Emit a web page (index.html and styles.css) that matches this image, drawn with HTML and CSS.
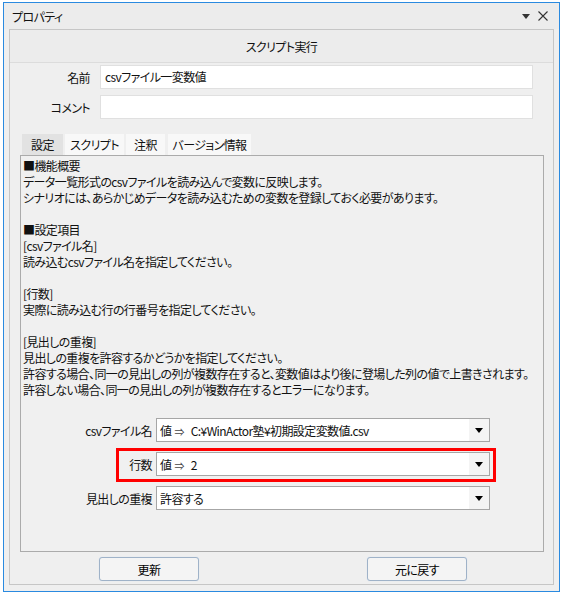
FILE: index.html
```html
<!DOCTYPE html>
<html lang="ja">
<head>
  <meta charset="UTF-8">
  <title>プロパティ</title>
  <link rel="stylesheet" href="styles.css">
</head>
<body>
<div class="window">
  <!-- title bar -->
  <div class="titlebar">
    <span class="title">プロパティ</span>
    <span class="controls">
      <svg width="8" height="5" viewBox="0 0 8 5"><path d="M0 0H8L4 5Z" fill="#333"/></svg>
      <svg width="10" height="10" viewBox="0 0 10 10"><path d="M0.5 0.5L9.5 9.5M9.5 0.5L0.5 9.5" stroke="#333" stroke-width="1.1" fill="none"/></svg>
    </span>
  </div>

  <div class="panel">
    <div class="header">スクリプト実行</div>

    <div class="row">
      <label class="row-label">名前</label>
      <div class="textbox">csvファイル一変数値</div>
    </div>
    <div class="row">
      <label class="row-label">コメント</label>
      <div class="textbox"></div>
    </div>

    <!-- tabs -->
    <div class="tabs">
      <div class="tab active">設定</div>
      <div class="tab tab-script">スクリプト</div>
      <div class="tab tab-note">注釈</div>
      <div class="tab tab-version">バージョン情報</div>
    </div>

    <div class="tab-body">
      <div class="desc">
        <p>■機能概要</p>
        <p>データ一覧形式のcsvファイルを読み込んで変数に反映します。</p>
        <p>シナリオには、あらかじめデータを読み込むための変数を登録しておく必要があります。</p>
        <p>&nbsp;</p>
        <p>■設定項目</p>
        <p>[csvファイル名]</p>
        <p>読み込むcsvファイル名を指定してください。</p>
        <p>&nbsp;</p>
        <p>[行数]</p>
        <p>実際に読み込む行の行番号を指定してください。</p>
        <p>&nbsp;</p>
        <p>[見出しの重複]</p>
        <p>見出しの重複を許容するかどうかを指定してください。</p>
        <p>許容する場合、同一の見出しの列が複数存在すると、変数値はより後に登場した列の値で上書きされます。</p>
        <p>許容しない場合、同一の見出しの列が複数存在するとエラーになります。</p>
      </div>

      <div class="fields">
        <div class="field">
          <span class="field-label">csvファイル名</span>
          <div class="combo">
            <span class="combo-text"><span class="kind">値</span><span class="arrow">⇒</span>C:¥WinActor塾¥初期設定変数値.csv</span>
            <span class="drop"><svg width="8" height="5" viewBox="0 0 8 5"><path d="M0 0H8L4 5Z" fill="#000"/></svg></span>
          </div>
        </div>
        <div class="field marked">
          <span class="field-label">行数</span>
          <div class="combo">
            <span class="combo-text"><span class="kind">値</span><span class="arrow">⇒</span>2</span>
            <span class="drop"><svg width="8" height="5" viewBox="0 0 8 5"><path d="M0 0H8L4 5Z" fill="#000"/></svg></span>
          </div>
        </div>
        <div class="field">
          <span class="field-label">見出しの重複</span>
          <div class="combo">
            <span class="combo-text">許容する</span>
            <span class="drop"><svg width="8" height="5" viewBox="0 0 8 5"><path d="M0 0H8L4 5Z" fill="#000"/></svg></span>
          </div>
        </div>
      </div>
    </div>

    <div class="buttons">
      <button class="btn">更新</button>
      <button class="btn">元に戻す</button>
    </div>
  </div>
</div>
</body>
</html>
```

FILE: styles.css
```css
/* General reset */
* {
  margin: 0;
  padding: 0;
  box-sizing: border-box;
}

body {
  font-family: "Noto Sans CJK JP", "Noto Sans", sans-serif;
  font-size: 12px;
  font-feature-settings: "palt";
  letter-spacing: -0.6px;
  color: #111;
  background: #fff;
}

.window {
  margin: 2px 0 0 3px;
  width: 557px;
  height: 590px;
  border: 1px solid #2a8ae0;
  background: #efefef;
  display: flex;
  flex-direction: column;
}

.titlebar {
  height: 26px;
  flex: none;
  display: flex;
  align-items: center;
  justify-content: space-between;
  padding: 0 11px 0 8px;
  background: #ececec;
}

.titlebar .controls {
  display: flex;
  align-items: center;
  gap: 8px;
}

.panel {
  flex: 1;
  margin: 0 5px 6px 5px;
  border: 1px solid #c6c6c6;
  background: #efefef;
  display: flex;
  flex-direction: column;
  padding-bottom: 3px;
}

.header {
  height: 33px;
  flex: none;
  border-bottom: 1px solid #dcdcdc;
  background: #ececec;
  display: flex;
  align-items: center;
  justify-content: center;
}

.row {
  display: flex;
  align-items: center;
  margin-top: 6px;
}

.header + .row {
  margin-top: 2px;
}

.row-label {
  width: 80px;
  text-align: right;
  margin-right: 10px;
}

.textbox {
  width: 433px;
  height: 24px;
  background: #fff;
  border: 1px solid #e0e0e0;
  padding: 0 4px;
  line-height: 22px;
}

.tabs {
  display: flex;
  gap: 2px;
  margin: 15px 0 0 12px;
  height: 21px;
}

.tab {
  width: 41px;
  text-align: center;
  line-height: 21px;
  background: #f8f8f8;
}

.tab-script {
  width: 59px;
}

.tab-note {
  width: 39px;
  margin-right: 1px;
}

.tab-version {
  width: 83px;
}

.tab.active {
  background: #e2e2e2;
}

.tab-body {
  height: 397px;
  margin: 0 9px 0 10px;
  border: 1px solid #ababab;
  background: #f0f0f0;
  padding: 2px 2px 0 2px;
}

.desc p {
  line-height: 16px;
  white-space: nowrap;
}

.fields {
  margin-top: 20px;
  display: flex;
  flex-direction: column;
  align-items: flex-start;
  gap: 10px;
}

.field {
  display: flex;
  align-items: center;
  position: relative;
}

.field-label {
  width: 129px;
  text-align: right;
  margin-right: 4px;
}

.combo {
  width: 334px;
  height: 24px;
  background: #fff;
  border: 1px solid #a6a6a6;
  display: flex;
  align-items: center;
}

.combo-text {
  flex: 1;
  padding-left: 3px;
  white-space: nowrap;
}

.combo-text .arrow {
  font-size: 10px;
  color: #444;
  margin: 0 7px 0 3px;
}

.drop {
  width: 20px;
  height: 22px;
  background: #f4f4f4;
  display: flex;
  align-items: center;
  justify-content: center;
}

/* red annotation frame */
.field.marked::after {
  content: "";
  position: absolute;
  left: 93px;
  right: -6px;
  top: -4px;
  bottom: -6px;
  border: 3px solid #f00;
}

.buttons {
  display: flex;
  margin-top: 5px;
  padding-left: 89px;
  gap: 168px;
}

.btn {
  width: 100px;
  height: 24px;
  font-family: inherit;
  font-size: 12px;
  font-feature-settings: "palt";
  letter-spacing: -0.6px;
  background: #f4f4f4;
  border: 1px solid #9fb2c8;
  border-radius: 3px;
  box-shadow: 0 0 1px #c9dcf0;
  color: #000;
}
```
